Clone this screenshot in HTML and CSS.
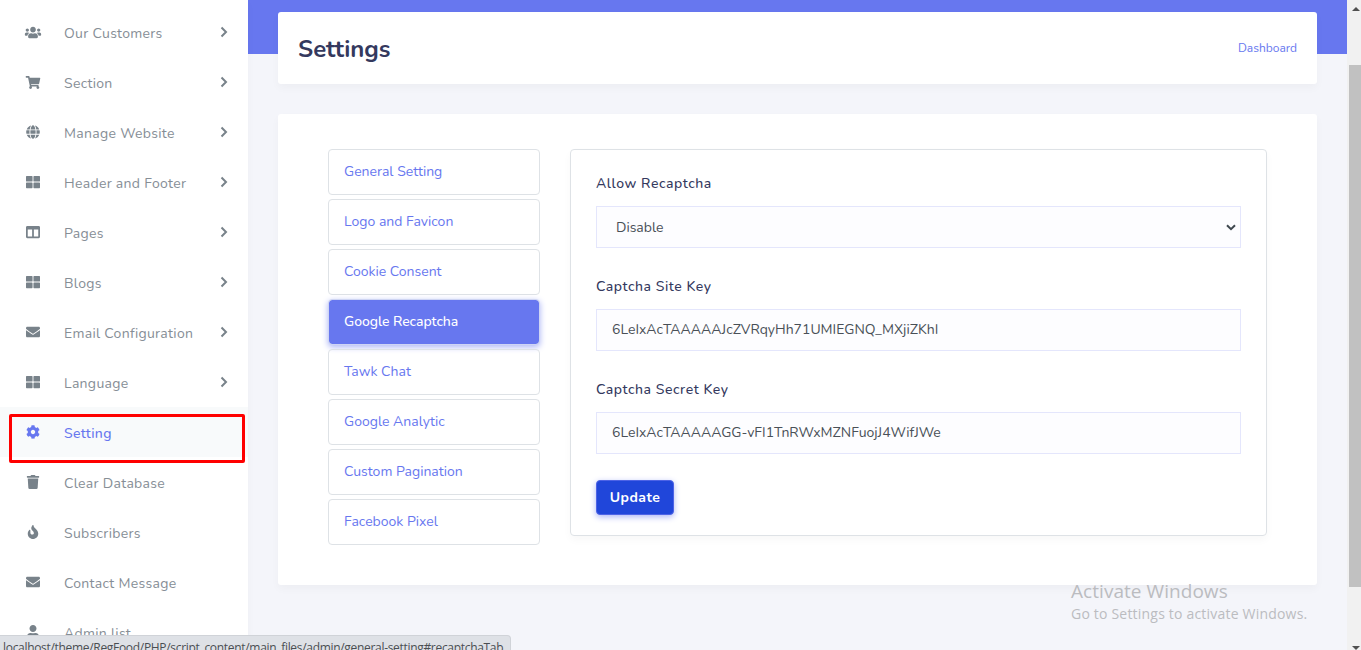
FILE: index.html
```html
<!DOCTYPE html>
<html lang="en">
<head>
<meta charset="utf-8">
<title>Settings</title>
<link rel="stylesheet" href="styles.css">
</head>
<body>
<svg class="sprite" aria-hidden="true">
  <symbol id="users" viewBox="0 0 640 512"><path d="M96 224c35.3 0 64-28.7 64-64s-28.7-64-64-64-64 28.7-64 64 28.7 64 64 64zm448 0c35.3 0 64-28.7 64-64s-28.7-64-64-64-64 28.7-64 64 28.7 64 64 64zm32 32h-64c-17.6 0-33.5 7.1-45.1 18.6 40.3 22.1 68.9 62 75.1 109.4h66c17.7 0 32-14.3 32-32v-32c0-35.3-28.7-64-64-64zm-256 0c61.9 0 112-50.1 112-112S381.9 32 320 32 208 82.1 208 144s50.1 112 112 112zm76.8 32h-8.3c-20.8 10-43.9 16-68.5 16s-47.6-6-68.5-16h-8.3C179.6 288 128 339.6 128 403.2V432c0 26.5 21.5 48 48 48h288c26.5 0 48-21.5 48-48v-28.8c0-63.6-51.6-115.2-115.2-115.2zm-223.7-13.4C161.5 263.1 145.6 256 128 256H64c-35.3 0-64 28.7-64 64v32c0 17.7 14.3 32 32 32h65.9c6.3-47.4 34.9-87.3 75.2-109.4z"/></symbol>
  <symbol id="cart" viewBox="0 0 576 512"><path d="M528.12 301.319l47.273-208C578.806 78.301 567.391 64 551.99 64H159.208l-9.166-44.81C147.758 8.021 137.93 0 126.529 0H24C10.745 0 0 10.745 0 24v16c0 13.255 10.745 24 24 24h69.883l70.248 343.435C147.325 417.1 136 435.222 136 456c0 30.928 25.072 56 56 56s56-25.072 56-56c0-15.674-6.447-29.835-16.824-40h209.647C430.447 426.165 424 440.326 424 456c0 30.928 25.072 56 56 56s56-25.072 56-56c0-22.172-12.888-41.332-31.579-50.405l5.517-24.276c3.413-15.018-8.002-29.319-23.403-29.319H218.117l-6.545-32h293.145c11.206 0 20.92-7.754 23.403-18.681z"/></symbol>
  <symbol id="globe" viewBox="0 0 496 512"><path d="M336.5 160C322 70.7 287.8 8 248 8s-74 62.7-88.5 152h177zM152 256c0 22.2 1.2 43.5 3.3 64h185.3c2.1-20.5 3.3-41.8 3.3-64s-1.2-43.5-3.3-64H155.3c-2.1 20.5-3.3 41.8-3.3 64zm324.7-96c-28.6-67.9-86.5-120.4-158-141.6 24.4 33.8 41.2 84.7 50 141.6h108zM177.2 18.4C105.8 39.6 47.8 92.1 19.3 160h108c8.7-56.9 25.5-107.8 49.9-141.6zM487.4 192H372.7c2.1 21 3.3 42.5 3.3 64s-1.2 43-3.3 64h114.6c5.5-20.5 8.6-41.8 8.6-64s-3.1-43.5-8.5-64zM120 256c0-21.5 1.2-43 3.3-64H8.6C3.2 212.5 0 233.8 0 256s3.2 43.5 8.6 64h114.6c-2-21-3.2-42.5-3.2-64zm39.5 96c14.5 89.3 48.7 152 88.5 152s74-62.7 88.5-152h-177zm159.3 141.6c71.4-21.2 129.4-73.7 158-141.6h-108c-8.8 56.9-25.6 107.8-50 141.6zM19.3 352c28.6 67.9 86.5 120.4 158 141.6-24.4-33.8-41.2-84.7-50-141.6h-108z"/></symbol>
  <symbol id="grid" viewBox="0 0 512 512"><path d="M296 32h192c13.255 0 24 10.745 24 24v160c0 13.255-10.745 24-24 24H296c-13.255 0-24-10.745-24-24V56c0-13.255 10.745-24 24-24zm-80 0H24C10.745 32 0 42.745 0 56v160c0 13.255 10.745 24 24 24h192c13.255 0 24-10.745 24-24V56c0-13.255-10.745-24-24-24zM0 296v160c0 13.255 10.745 24 24 24h192c13.255 0 24-10.745 24-24V296c0-13.255-10.745-24-24-24H24c-13.255 0-24 10.745-24 24zm296 184h192c13.255 0 24-10.745 24-24V296c0-13.255-10.745-24-24-24H296c-13.255 0-24 10.745-24 24v160c0 13.255 10.745 24 24 24z"/></symbol>
  <symbol id="columns" viewBox="0 0 512 512"><path d="M464 32H48C21.49 32 0 53.49 0 80v352c0 26.51 21.49 48 48 48h416c26.51 0 48-21.49 48-48V80c0-26.51-21.49-48-48-48zM224 416H64V160h160v256zm224 0H288V160h160v256z"/></symbol>
  <symbol id="envelope" viewBox="0 0 512 512"><path d="M502.3 190.8c3.9-3.1 9.7-.2 9.7 4.7V400c0 26.5-21.5 48-48 48H48c-26.5 0-48-21.5-48-48V195.6c0-5 5.7-7.8 9.7-4.7 22.4 17.4 52.1 39.5 154.1 113.6 21.1 15.4 56.7 47.8 92.2 47.6 35.7.3 72-32.8 92.3-47.6 102-74.1 131.6-96.3 154-113.7zM256 320c23.2.4 56.6-29.2 73.4-41.4 132.7-96.3 142.8-104.7 173.4-128.7 5.8-4.5 9.2-11.5 9.2-18.9v-19c0-26.5-21.5-48-48-48H48c-26.5 0-48 21.5-48 48v19c0 7.4 3.4 14.3 9.2 18.9 30.6 23.9 40.7 32.4 173.4 128.7 16.8 12.2 50.2 41.8 73.4 41.4z"/></symbol>
  <symbol id="cog" viewBox="0 0 512 512"><path d="M487.4 315.7l-42.6-24.6c4.3-23.2 4.3-47 0-70.2l42.6-24.6c4.9-2.8 7.1-8.6 5.5-14-11.1-35.6-30-67.8-54.7-94.6-3.8-4.1-10-5.1-14.8-2.3L380.8 110c-17.9-15.4-38.5-27.3-60.8-35.1V25.8c0-5.6-3.9-10.5-9.4-11.7-36.7-8.2-74.3-7.8-109.2 0-5.5 1.2-9.4 6.1-9.4 11.7V75c-22.2 7.9-42.8 19.8-60.8 35.1L88.7 85.5c-4.9-2.8-11-1.9-14.8 2.3-24.7 26.7-43.6 58.9-54.7 94.6-1.7 5.4.6 11.2 5.5 14L67.3 221c-4.3 23.2-4.3 47 0 70.2l-42.6 24.6c-4.9 2.8-7.1 8.6-5.5 14 11.1 35.6 30 67.8 54.7 94.6 3.8 4.1 10 5.1 14.8 2.3l42.6-24.6c17.9 15.4 38.5 27.3 60.8 35.1v49.2c0 5.6 3.9 10.5 9.4 11.7 36.7 8.2 74.3 7.8 109.2 0 5.5-1.2 9.4-6.1 9.4-11.7v-49.2c22.2-7.9 42.8-19.8 60.8-35.1l42.6 24.6c4.9 2.8 11 1.9 14.8-2.3 24.7-26.7 43.6-58.9 54.7-94.6 1.5-5.5-.7-11.3-5.6-14.1zM256 336c-44.1 0-80-35.9-80-80s35.9-80 80-80 80 35.9 80 80-35.9 80-80 80z"/></symbol>
  <symbol id="trash" viewBox="0 0 448 512"><path d="M432 32H312l-9.4-18.7A24 24 0 0 0 281.1 0H166.8a23.72 23.72 0 0 0-21.4 13.3L136 32H16A16 16 0 0 0 0 48v32a16 16 0 0 0 16 16h416a16 16 0 0 0 16-16V48a16 16 0 0 0-16-16zM53.2 467a48 48 0 0 0 47.9 45h245.8a48 48 0 0 0 47.9-45L416 128H32z"/></symbol>
  <symbol id="fire" viewBox="0 0 384 512"><path d="M216 23.86c0-23.8-30.65-32.77-44.15-13.04C48 191.85 224 200 224 288c0 35.63-29.11 64.46-64.85 63.99-35.17-.45-63.15-29.77-63.15-64.94v-85.51c0-21.7-26.47-32.23-41.43-16.5C27.8 213.16 0 261.33 0 320c0 105.87 86.13 192 192 192s192-86.13 192-192c0-170.29-168-193-168-296.14z"/></symbol>
  <symbol id="user" viewBox="0 0 448 512"><path d="M224 256c70.7 0 128-57.3 128-128S294.7 0 224 0 96 57.3 96 128s57.3 128 128 128zm89.6 32h-16.7c-22.2 10.2-46.9 16-72.9 16s-50.6-5.8-72.9-16h-16.7C60.2 288 0 348.2 0 422.4V464c0 26.5 21.5 48 48 48h352c26.5 0 48-21.5 48-48v-41.6c0-74.2-60.2-134.4-134.4-134.4z"/></symbol>
  <symbol id="chevron" viewBox="0 0 8 12"><path d="M1.5 1.5 6 6 1.5 10.5" fill="none" stroke="currentColor" stroke-width="2"/></symbol>
</svg>

<div class="app">
  <nav class="sidebar">
    <a class="nav-item"><svg class="nav-icon wide"><use href="#users"/></svg><span class="nav-text">Our Customers</span><svg class="nav-arrow"><use href="#chevron"/></svg></a>
    <a class="nav-item"><svg class="nav-icon wide"><use href="#cart"/></svg><span class="nav-text">Section</span><svg class="nav-arrow"><use href="#chevron"/></svg></a>
    <a class="nav-item"><svg class="nav-icon"><use href="#globe"/></svg><span class="nav-text">Manage Website</span><svg class="nav-arrow"><use href="#chevron"/></svg></a>
    <a class="nav-item"><svg class="nav-icon"><use href="#grid"/></svg><span class="nav-text">Header and Footer</span><svg class="nav-arrow"><use href="#chevron"/></svg></a>
    <a class="nav-item"><svg class="nav-icon"><use href="#columns"/></svg><span class="nav-text">Pages</span><svg class="nav-arrow"><use href="#chevron"/></svg></a>
    <a class="nav-item"><svg class="nav-icon"><use href="#grid"/></svg><span class="nav-text">Blogs</span><svg class="nav-arrow"><use href="#chevron"/></svg></a>
    <a class="nav-item"><svg class="nav-icon"><use href="#envelope"/></svg><span class="nav-text">Email Configuration</span><svg class="nav-arrow"><use href="#chevron"/></svg></a>
    <a class="nav-item"><svg class="nav-icon"><use href="#grid"/></svg><span class="nav-text">Language</span><svg class="nav-arrow"><use href="#chevron"/></svg></a>
    <a class="nav-item active"><svg class="nav-icon"><use href="#cog"/></svg><span class="nav-text">Setting</span><span class="highlight"></span></a>
    <a class="nav-item"><svg class="nav-icon"><use href="#trash"/></svg><span class="nav-text">Clear Database</span></a>
    <a class="nav-item"><svg class="nav-icon"><use href="#fire"/></svg><span class="nav-text">Subscribers</span></a>
    <a class="nav-item"><svg class="nav-icon"><use href="#envelope"/></svg><span class="nav-text">Contact Message</span></a>
    <a class="nav-item"><svg class="nav-icon"><use href="#user"/></svg><span class="nav-text">Admin list</span></a>
  </nav>

  <main class="main">
    <header class="page-header">
      <h1 class="page-title">Settings</h1>
      <a class="breadcrumb">Dashboard</a>
    </header>
    <section class="card">
      <div class="tabs">
        <a class="tab">General Setting</a>
        <a class="tab">Logo and Favicon</a>
        <a class="tab">Cookie Consent</a>
        <a class="tab current">Google Recaptcha</a>
        <a class="tab">Tawk Chat</a>
        <a class="tab">Google Analytic</a>
        <a class="tab">Custom Pagination</a>
        <a class="tab">Facebook Pixel</a>
      </div>
      <form class="panel">
        <label class="label">Allow Recaptcha</label>
        <div class="control select"><span>Disable</span><svg class="select-arrow" viewBox="0 0 10 7"><path d="M1 1.2 5 5.2 9 1.2" fill="none" stroke="currentColor" stroke-width="2"/></svg></div>
        <label class="label">Captcha Site Key</label>
        <div class="control site-key">6LeIxAcTAAAAAJcZVRqyHh71UMIEGNQ_MXjiZKhI</div>
        <label class="label">Captcha Secret Key</label>
        <div class="control secret-key">6LeIxAcTAAAAAGG-vFI1TnRWxMZNFuojJ4WifJWe</div>
        <button class="button" type="button">Update</button>
      </form>
    </section>
  </main>

  <div class="scrollbar"><i class="arrow up"></i><i class="thumb"></i><i class="arrow down"></i></div>
</div>

<div class="watermark"><div class="wm-title">Activate Windows</div><div class="wm-text">Go to Settings to activate Windows.</div></div>
<div class="status">localhost/theme/RegFood/PHP/script_content/main_files/admin/general-setting#recaptchaTab</div>
</body>
</html>
```
FILE: styles.css
```css
* { box-sizing: border-box; }
body {
  margin: 0;
  height: 650px;
  overflow: hidden;
  position: relative;
  background: #f4f6f9;
  font-family: Nunito, Lato, "Open Sans", sans-serif;
  font-size: 14px;
}
.sprite { display: none; }
.app { display: flex; height: 650px; }

.sidebar {
  width: 248px;
  flex: none;
  padding-top: 7px;
  background: #fff;
  box-shadow: 0 4px 8px rgba(0, 0, 0, .03);
  overflow: hidden;
  z-index: 1;
}
.nav-item {
  position: relative;
  display: flex;
  align-items: center;
  height: 50px;
  padding: 0 19px 0 23px;
  color: #78828a;
}
.nav-icon { width: 20px; height: 14px; fill: currentColor; }
.nav-icon.wide { height: 13px; }
.nav-text { flex: 1; margin-left: 21px; padding-top: 2px; letter-spacing: .3px; color: #868e96; }
.nav-arrow { width: 8px; height: 12px; margin: 0 1px 1px 0; }
.nav-item.active { background: #f8fafb; color: #6777ef; }
.active .nav-text { color: #6777ef; font-weight: 500; }
.highlight {
  position: absolute;
  left: 9px;
  top: 7px;
  width: 236px;
  height: 49px;
  border: 3px solid #f00;
  border-radius: 2px;
  z-index: 2;
}

.main {
  flex: 1;
  padding: 12px 30px 0;
  background: linear-gradient(#6777ef 54px, #f4f5fa 54px);
}
.page-header {
  display: flex;
  align-items: center;
  justify-content: space-between;
  height: 72px;
  padding: 0 20px;
  background: #fff;
  border-radius: 3px;
  box-shadow: 0 4px 8px rgba(0, 0, 0, .03);
}
.page-title { margin: 2px 0 0; font-size: 24px; font-weight: 700; color: #34395e; }
.breadcrumb { font-size: 12px; color: #6777ef; }
.card {
  display: flex;
  align-items: flex-start;
  gap: 30px;
  height: 471px;
  margin-top: 30px;
  padding: 35px 50px 0;
  background: #fff;
  border-radius: 3px;
  box-shadow: 0 4px 8px rgba(0, 0, 0, .03);
}
.tabs { display: flex; flex-direction: column; gap: 4px; width: 212px; }
.tab {
  display: flex;
  align-items: center;
  height: 46px;
  padding: 0 15px 1px;
  border: 1px solid #dee2e6;
  border-radius: 4px;
  color: #6777ef;
}
.tab.current {
  color: #fff;
  background: #6777ef padding-box;
  border-color: #cfd5f4;
  box-shadow: 0 2px 6px #acb5f6;
  font-weight: 500;
  letter-spacing: -.06px;
}
.panel {
  flex: 1;
  height: 387px;
  padding: 23px 25px 0;
  border: 1px solid #dee2e6;
  border-radius: 4px;
  box-shadow: 0 4px 8px rgba(0, 0, 0, .03);
}
.label {
  display: block;
  height: 22px;
  margin-bottom: 11px;
  line-height: 22px;
  font-weight: 500;
  letter-spacing: .55px;
  color: #34395e;
}
.control {
  display: flex;
  align-items: center;
  height: 42px;
  margin-bottom: 28px;
  padding: 0 15px 1px;
  border: 1px solid #e4e6fc;
  background: #fdfdff;
  color: #495057;
}
.select { justify-content: space-between; padding: 0 4px 0 19px; }
.select-arrow { width: 10px; height: 7px; color: #3f484f; }
.secret-key { margin-bottom: 26px; }
.button {
  width: 78px;
  height: 35px;
  border: 1px solid #4d63e6;
  border-radius: 4px;
  background: #2046da;
  box-shadow: 0 2px 6px #acb5f6;
  color: #fff;
  font: 700 14px Nunito, Lato, sans-serif;
  letter-spacing: .5px;
}

.scrollbar {
  display: flex;
  flex-direction: column;
  width: 14px;
  padding: 7px 0 0 2px;
  background: #f1f1f1;
}
.arrow { width: 0; height: 0; margin-left: 3px; border: 4px solid transparent; border-top: 0; border-bottom-color: #505050; }
.arrow.down { margin-top: 59px; border-top: 4px solid #505050; border-bottom: 0; }
.thumb { height: 522px; margin-top: 54px; background: #c1c1c1; }

.watermark {
  position: absolute;
  left: 1071px;
  top: 579px;
  font-family: "Segoe UI", "Open Sans", sans-serif;
  color: #bbbcc0;
  white-space: nowrap;
}
.wm-title { font-size: 19px; line-height: 25px; letter-spacing: .05px; }
.wm-text { font-size: 14px; line-height: 20px; letter-spacing: .2px; }
.status {
  position: absolute;
  left: 0;
  top: 635px;
  width: 511px;
  height: 24px;
  padding: 4px 0 0 3px;
  border: 1px solid #d0d3d8;
  border-left: 0;
  border-radius: 0 4px 0 0;
  background: #dee1e6;
  font: 12px/16px "Segoe UI", "Open Sans", sans-serif;
  letter-spacing: -.31px;
  color: #4a4e52;
  white-space: nowrap;
  z-index: 3;
}
```
